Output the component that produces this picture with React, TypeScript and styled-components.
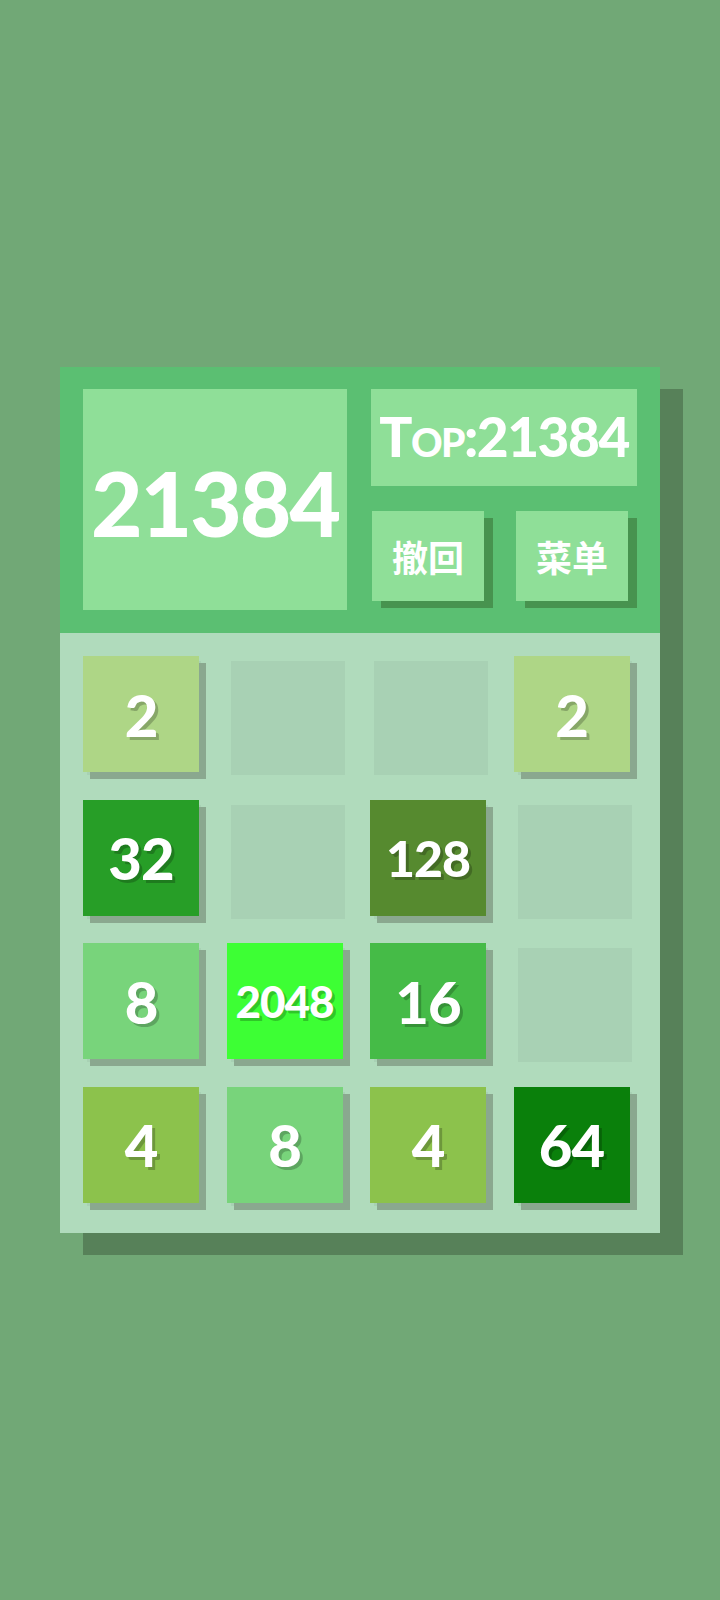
import styled, { createGlobalStyle } from 'styled-components';

const GlobalStyle = createGlobalStyle`
  html, body {
    margin: 0;
    padding: 0;
    background-color: #71a876;
  }
  * {
    box-sizing: border-box;
  }
`;

const board: number[][] = [
  [2, 0, 0, 2],
  [32, 0, 128, 0],
  [8, 2048, 16, 0],
  [4, 8, 4, 64],
];

const tileColors: Record<number, string> = {
  2: '#aed686',
  4: '#8cc24c',
  8: '#78d47b',
  16: '#45bb47',
  32: '#279e27',
  64: '#0a800b',
  128: '#568a2f',
  2048: '#3dff34',
};

function fontSizeFor(value: number): number {
  const len = String(value).length;
  if (len >= 4) return 44;
  if (len === 3) return 50;
  return 58;
}

export default function App(): JSX.Element {
  return (
    <>
      <GlobalStyle />
      <Page>
        <Card>
          <Header>
            <ScoreBox>21384</ScoreBox>
            <SideColumn>
              <TopBox>Top:21384</TopBox>
              <ButtonRow>
                <ActionButton>撤回</ActionButton>
                <ActionButton>菜单</ActionButton>
              </ButtonRow>
            </SideColumn>
          </Header>
          <Board>
            {board.flat().map((value, i) => (
              <Slot key={i}>
                {value > 0 && (
                  <Tile $color={tileColors[value]} $size={fontSizeFor(value)}>
                    {value}
                  </Tile>
                )}
              </Slot>
            ))}
          </Board>
        </Card>
      </Page>
    </>
  );
}

const Page = styled.div`
  min-height: 100vh;
  display: flex;
  align-items: center;
  justify-content: center;
`;

const Card = styled.div`
  width: 600px;
  display: flex;
  flex-direction: column;
  box-shadow: 23px 22px 0 #578159;
`;

const Header = styled.div`
  background-color: #5bbf72;
  height: 266px;
  padding: 22px 23px 23px 23px;
  display: flex;
  flex-direction: row;
  gap: 24px;
`;

const ScoreBox = styled.div`
  width: 264px;
  background-color: #8fdf98;
  display: flex;
  align-items: center;
  justify-content: center;
  color: #ffffff;
  font-family: 'Lato', 'Noto Sans', sans-serif;
  font-weight: 900;
  font-size: 89px;
  letter-spacing: -2px;
  padding-top: 6px;
`;

const SideColumn = styled.div`
  flex: 1;
  display: flex;
  flex-direction: column;
  gap: 25px;
`;

const TopBox = styled.div`
  height: 97px;
  background-color: #8fdf98;
  display: flex;
  align-items: center;
  justify-content: center;
  color: #ffffff;
  font-family: 'Lato', 'Noto Sans', sans-serif;
  font-weight: 900;
  font-size: 55px;
  font-variant: small-caps;
  letter-spacing: -1.5px;
  padding-bottom: 4px;
`;

const ButtonRow = styled.div`
  display: flex;
  flex-direction: row;
  justify-content: space-between;
  padding: 0 9px 0 1px;
`;

const ActionButton = styled.div`
  width: 112px;
  height: 90px;
  background-color: #8fdf98;
  box-shadow: 9px 7px 0 #47934f;
  display: flex;
  align-items: center;
  justify-content: center;
  color: #ffffff;
  font-family: 'Noto Sans CJK SC', 'Noto Sans', sans-serif;
  font-weight: 700;
  font-size: 36px;
`;

const Board = styled.div`
  background-color: #b0dbbc;
  height: 600px;
  padding: 28px 27px 28px 27px;
  display: grid;
  grid-template-columns: repeat(4, 114px);
  grid-template-rows: repeat(4, 114px);
  column-gap: 29.5px;
  row-gap: 29.5px;
`;

const Slot = styled.div`
  background-color: #a8d1b4;
`;

const Tile = styled.div<{ $color: string; $size: number }>`
  width: 116px;
  height: 116px;
  margin: -5px 0 0 -4px;
  background-color: ${(p) => p.$color};
  box-shadow: 7px 7px 0 #8aa88f;
  display: flex;
  align-items: center;
  justify-content: center;
  color: #ffffff;
  font-family: 'Lato', 'Noto Sans', sans-serif;
  font-weight: 900;
  font-size: ${(p) => p.$size}px;
  letter-spacing: -1px;
  text-shadow: 3px 3px 0 rgba(0, 0, 0, 0.22);
`;
